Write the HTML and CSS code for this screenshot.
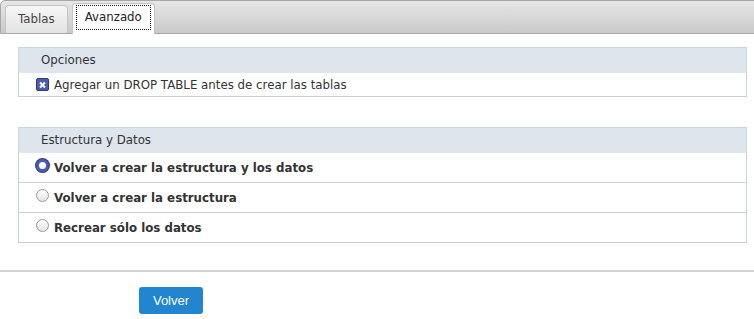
FILE: index.html
```html
<!DOCTYPE html>
<html lang="es">
<head>
  <meta charset="UTF-8" />
  <title>Avanzado</title>
  <link rel="stylesheet" href="styles.css">
</head>
<body>
  <div class="tabs">
    <div class="tab">Tablas</div>
    <div class="tab active"><span>Avanzado</span></div>
  </div>

  <div class="content">
    <section class="box">
      <div class="box-head">Opciones</div>
      <div class="row">
        <span class="check"></span>
        Agregar un DROP TABLE antes de crear las tablas
      </div>
    </section>

    <section class="box">
      <div class="box-head">Estructura y Datos</div>
      <div class="row strong"><span class="radio on"></span>Volver a crear la estructura y los datos</div>
      <div class="row strong"><span class="radio"></span>Volver a crear la estructura</div>
      <div class="row strong"><span class="radio"></span>Recrear sólo los datos</div>
    </section>
  </div>

  <div class="footer">
    <button class="btn">Volver</button>
  </div>
</body>
</html>
```

FILE: styles.css
```css
body {
  margin: 0;
  font-family: 'DejaVu Sans', Verdana, sans-serif;
  font-size: 11.8px;
  color: #333;
  background: #fff;
}
.tabs {
  display: flex;
  align-items: flex-end;
  gap: 4px;
  height: 28px;
  width: calc(100% + 10px);
  padding: 4px 0 0 4px;
  border: 1px solid #a8a8a8;
  border-radius: 5px 0 0 0;
  background: linear-gradient(#e7e7e7, #c9c9c9);
}
.tab {
  height: 27px;
  line-height: 27px;
  padding: 0 12px;
  border: 1px solid #c4c4c4;
  border-bottom: none;
  border-radius: 4px 4px 0 0;
  background: linear-gradient(#f7f7f7, #e2e2e2);
  color: #444;
}
.tab.active {
  padding: 1px 3px 1px 3px;
  height: 28px;
  line-height: normal;
  background: #fff;
  color: #222;
  margin-bottom: -1px;
}
.tab.active span {
  display: block;
  height: 23px;
  line-height: 23px;
  padding: 0 8px;
  border: 1px dotted #222;
}
.content {
  padding: 13px 7px 0 18px;
}
.box {
  border: 1px solid #c8d6de;
  border-bottom-color: #cfcfcf;
  margin-bottom: 30px;
}
.box-head {
  height: 25px;
  line-height: 25px;
  padding-left: 22px;
  background: #dee5ed;
  color: #333;
}
.row {
  display: flex;
  align-items: center;
  gap: 5px;
  height: 23px;
  padding-left: 17px;
  border-top: 1px solid #d2d2d2;
  background: #fff;
}
.box-head + .row {
  border-top: none;
}
.row.strong {
  font-weight: bold;
  height: 29px;
}
.check {
  width: 11px;
  height: 11px;
  border: 1px solid #2c3a7a;
  border-radius: 2px;
  background: #4a5cb0;
  position: relative;
}
.check::before,
.check::after {
  content: "";
  position: absolute;
  left: 2px;
  top: 5px;
  width: 7px;
  height: 2px;
  background: #fff;
  transform: rotate(45deg);
}
.check::after {
  transform: rotate(-45deg);
}
.radio {
  width: 11px;
  height: 11px;
  border: 1px solid #9a9a9a;
  border-radius: 50%;
  background: linear-gradient(#ffffff, #e4e4e4);
  align-self: flex-start;
  margin-top: 6px;
}
.radio.on {
  width: 7px;
  height: 7px;
  border: 3px solid #4a5cb0;
  background: #fff;
  box-shadow: 0 0 0 1px #2e3b7c;
}
.footer {
  margin-top: -3px;
  border-top: 2px solid #d4d4d4;
  padding: 15px 0 0 139px;
}
.btn {
  width: 64px;
  height: 27px;
  border: none;
  border-radius: 3px;
  background: #2185d0;
  color: #fff;
  font-family: 'Liberation Sans', Arial, sans-serif;
  font-size: 13px;
}
```
